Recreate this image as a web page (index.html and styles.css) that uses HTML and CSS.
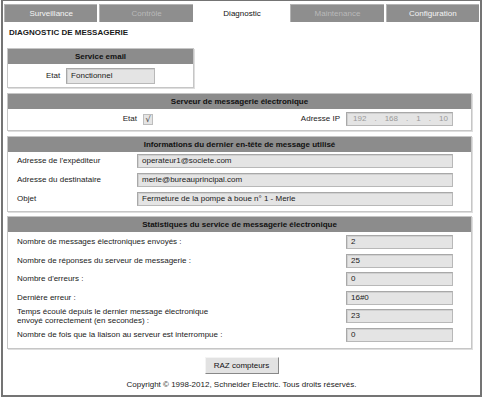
FILE: index.html
```html
<!DOCTYPE html>
<html lang="fr">
<head>
<meta charset="UTF-8">
<title>Diagnostic de messagerie</title>
<link rel="stylesheet" href="styles.css">
</head>
<body>

<div class="frame">
    <div class="tabs">
        <div class="tab">Surveillance</div>
        <div class="tab disabled">Contrôle</div>
        <div class="tab active">Diagnostic</div>
        <div class="tab disabled">Maintenance</div>
        <div class="tab">Configuration</div>
    </div>

    <h1 class="page-title">DIAGNOSTIC DE MESSAGERIE</h1>

    <!-- Service email -->
    <div class="box box-small">
        <div class="box-head">Service email</div>
        <div class="row-etat">
            <span class="lbl">Etat</span>
            <span class="field field-etat">Fonctionnel</span>
        </div>
    </div>

    <!-- Serveur -->
    <div class="box">
        <div class="box-head">Serveur de messagerie électronique</div>
        <div class="row-server">
            <span class="lbl right">Etat</span>
            <span class="check">√</span>
            <span class="lbl right">Adresse IP</span>
            <span class="field ip">
                <span>192</span><span>.</span><span>168</span><span>.</span><span>1</span><span>.</span><span>10</span>
            </span>
        </div>
    </div>

    <!-- Dernier en-tete -->
    <div class="box">
        <div class="box-head">Informations du dernier en-tête de message utilisé</div>
        <div class="rows rows-info">
            <span class="lbl">Adresse de l'expéditeur</span>
            <span class="field">operateur1@societe.com</span>
            <span class="lbl">Adresse du destinataire</span>
            <span class="field">merle@bureauprincipal.com</span>
            <span class="lbl">Objet</span>
            <span class="field">Fermeture de la pompe à boue n° 1 - Merle</span>
        </div>
    </div>

    <!-- Statistiques -->
    <div class="box box-stats">
        <div class="box-head">Statistiques du service de messagerie électronique</div>
        <div class="rows rows-stats">
            <span class="lbl">Nombre de messages électroniques envoyés :</span>
            <span class="field">2</span>
            <span class="lbl">Nombre de réponses du serveur de messagerie :</span>
            <span class="field">25</span>
            <span class="lbl">Nombre d'erreurs :</span>
            <span class="field">0</span>
            <span class="lbl">Dernière erreur :</span>
            <span class="field">16#0</span>
            <span class="lbl two-lines">Temps écoulé depuis le dernier message électronique envoyé correctement (en secondes) :</span>
            <span class="field">23</span>
            <span class="lbl">Nombre de fois que la liaison au serveur est interrompue :</span>
            <span class="field">0</span>
        </div>
    </div>

    <div class="actions">
        <button class="btn">RAZ compteurs</button>
    </div>

    <p class="copyright">Copyright © 1998-2012, Schneider Electric. Tous droits réservés.</p>
</div>

</body>
</html>
```

FILE: styles.css
```css
body {
    margin: 0;
    padding: 0;
    font-family: "Liberation Sans", Arial, sans-serif;
    font-size: 8px;
    color: #1a1a1a;
    background-color: #fff;
}

.frame {
    box-sizing: border-box;
    width: 481px;
    height: 397px;
    margin-left: 1px;
    border: 2px solid #747474;
    border-top-width: 1px;
    padding: 3px 1px 0 1px;
}

/* Tabs */
.tabs {
    display: flex;
    gap: 2px;
}

.tab {
    flex: 1;
    height: 18px;
    line-height: 18px;
    text-align: center;
    background-color: #8e8e8e;
    color: #f4f4f4;
    box-sizing: border-box;
    border-top: 1px solid #b4b4b4;
    border-left: 1px solid #b4b4b4;
}

.tab.disabled {
    color: #b9b9b9;
}

.tab.active {
    background-color: #fff;
    color: #111;
    border-color: #fff;
}

.page-title {
    font-size: 8px;
    font-weight: bold;
    margin: 6px 0 0 5px;
    height: 10px;
    line-height: 10px;
}

/* Boxes */
.box {
    width: 463px;
    margin: 0 0 5px 3px;
    border: 1px solid #c6c6c6;
    box-shadow: 1px 1px 0 #dedede;
}

.box-small {
    width: 185px;
    margin-top: 10px;
}

.box-stats {
    margin-top: -1px;
}

.box-head {
    background-color: #8c8c8c;
    color: #111;
    font-weight: bold;
    text-align: center;
    height: 15px;
    line-height: 15px;
}

.lbl {
    line-height: 10px;
}

.lbl.right {
    text-align: right;
    padding-right: 6px;
}

.field {
    box-sizing: border-box;
    height: 14px;
    line-height: 12px;
    padding: 0 4px;
    background-color: #e4e4e4;
    border: 1px solid #b8b8b8;
    border-top-color: #a8a8a8;
    border-left-color: #a8a8a8;
    box-shadow: inset 1px 1px 0 #d0d0d0;
    white-space: nowrap;
    overflow: hidden;
}

.row-etat {
    display: flex;
    align-items: center;
    justify-content: center;
    gap: 6px;
    padding: 4px 0 3px 0;
}

.field-etat {
    width: 89px;
    height: 16px;
    line-height: 14px;
}

.row-server {
    display: grid;
    grid-template-columns: 135px 12px 1fr 107px;
    align-items: center;
    padding: 3px 18px 4px 0;
}

.check {
    box-sizing: border-box;
    width: 10px;
    height: 11px;
    line-height: 10px;
    text-align: center;
    background-color: #e4e4e4;
    border: 1px solid #bdbdbd;
    color: #333;
    font-family: "DejaVu Sans", sans-serif;
    font-size: 8px;
}

.ip {
    display: flex;
    justify-content: space-between;
    color: #9a9a9a;
    padding: 0 4px 0 6px;
}

.rows {
    display: grid;
    align-items: center;
    grid-auto-rows: 14px;
    row-gap: 5px;
    padding: 2px 18px 5px 9px;
}

.rows-info {
    grid-template-columns: 120px 1fr;
}

.rows-stats {
    grid-template-columns: 1fr 107px;
    padding-top: 3px;
    padding-bottom: 6px;
    row-gap: 4.6px;
}

.two-lines {
    width: 200px;
    line-height: 9px;
}

.actions {
    text-align: center;
    margin-top: 8px;
}

.btn {
    display: inline-block;
    vertical-align: top;
    font-family: "Liberation Sans", Arial, sans-serif;
    font-size: 8px;
    color: #111;
    width: 74px;
    height: 17px;
    padding: 0;
    background-color: #e2e2e2;
    border: 1px solid;
    border-color: #f4f4f4 #888 #888 #f4f4f4;
}

.copyright {
    text-align: center;
    margin: 6px 0 0 0;
    line-height: 10px;
}
```
